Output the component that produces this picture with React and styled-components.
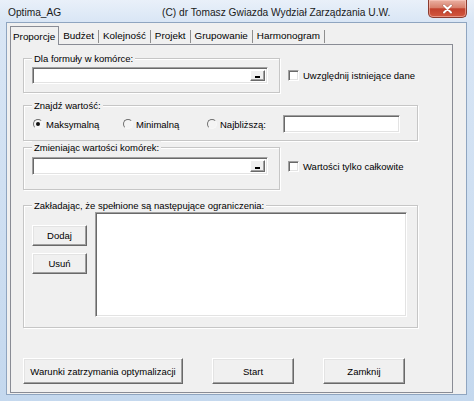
import React from 'react';
import styled, { createGlobalStyle } from 'styled-components';

const GlobalStyle = createGlobalStyle`
  html, body {
    margin: 0;
    padding: 0;
    background: #ffffff;
  }
  body {
    font-family: "Liberation Sans", Arial, sans-serif;
  }
  * {
    box-sizing: border-box;
  }
`;

const Window = styled.div`
  width: 474px;
  height: 401px;
  display: flex;
  flex-direction: column;
  background: linear-gradient(to bottom, #e9f0f9 0px, #d9e6f5 22px, #c4d8ee 100%);
  overflow: hidden;
`;

const TitleBar = styled.div`
  height: 22px;
  flex-shrink: 0;
  display: flex;
  align-items: flex-start;
  font-size: 10.2px;
  color: #1a1a1a;
`;

const Caption = styled.span`
  width: 162px;
  padding: 7px 0 0 8px;
  white-space: nowrap;
`;

const SubCaption = styled.span`
  padding-top: 7px;
  white-space: nowrap;
`;

const CloseButton = styled.div`
  margin-left: auto;
  margin-right: 7px;
  width: 39px;
  height: 18px;
  border: 1px solid #8a3b2f;
  border-top: none;
  border-radius: 0 0 5px 5px;
  background: linear-gradient(#eab0a2, #d8806c 45%, #c2412d 52%, #d2583f);
  box-shadow: inset 0 0 0 1px rgba(255, 210, 200, 0.5);
  display: flex;
  align-items: center;
  justify-content: center;
`;

const Body = styled.div`
  flex: 1;
  min-height: 0;
  margin: 0 7px 6px 6px;
  border: 1px solid #8fa5c0;
  background: #f0f0f0;
  padding: 3px 13px 1px 3px;
  display: flex;
  flex-direction: column;
`;

const TabStrip = styled.div`
  height: 18px;
  display: flex;
  align-items: flex-end;
  font-size: 9.9px;
  color: #000;
`;

const Tab = styled.div`
  display: flex;
  align-items: center;
  white-space: nowrap;
  ${({ $active }) =>
    $active
      ? `
    height: 19px;
    margin-bottom: -1px;
    padding: 0 3px 0 2px;
    border: 1px solid #898c95;
    border-bottom: none;
    background: #f0f0f0;
    position: relative;
    z-index: 1;
  `
      : `
    height: 13px;
    margin-bottom: 1px;
    padding: 0 4px 2px 4px;
    border-right: 1px solid #8e8e8e;
  `}
`;

const Panel = styled.div`
  flex: 1;
  display: flex;
  flex-direction: column;
  border: 1px solid #898c95;
  padding: 7px 0 8px 12px;
  font-size: 9.5px;
  color: #000;
`;

const Row = styled.div`
  display: flex;
  align-items: flex-start;
  margin-top: ${({ $top }) => $top || 0}px;
`;

const Group = styled.fieldset`
  margin: 0;
  min-width: 0;
  width: ${({ $width }) => $width}px;
  padding: ${({ $pt }) => $pt}px 8px ${({ $pb }) => $pb}px 8px;
  border: 1px solid #c6c6c6;
  box-shadow: 1px 1px 0 #ffffff, inset 1px 1px 0 #ffffff;
`;

const Legend = styled.legend`
  padding: 0 2px;
  line-height: 13px;
  height: 13px;
  background: #f0f0f0;
  white-space: nowrap;
`;

const Sunken = styled.div`
  background: #ffffff;
  border: 1px solid;
  border-color: #a0a0a0 #ffffff #ffffff #a0a0a0;
  box-shadow: inset 1px 1px 0 #696969, inset -1px -1px 0 #e3e3e3;
`;

const TextBox = styled(Sunken)`
  width: ${({ $width }) => $width}px;
  height: ${({ $height }) => $height}px;
  display: flex;
  justify-content: flex-end;
  padding: 2px;
  flex-shrink: 0;
`;

const RefButton = styled.div`
  width: 15px;
  height: 100%;
  background: #f0f0f0;
  border: 1px solid;
  border-color: #ffffff #696969 #696969 #ffffff;
  box-shadow: inset -1px -1px 0 #a0a0a0;
  display: flex;
  align-items: flex-end;
  justify-content: center;
  padding-bottom: 2px;
`;

const RefMark = styled.span`
  width: 5px;
  height: 2px;
  background: #000;
`;

const CheckItem = styled.label`
  display: flex;
  align-items: center;
  gap: 4px;
  height: 13px;
  margin: ${({ $top }) => $top}px 0 0 8px;
  white-space: nowrap;
`;

const CheckBox = styled.span`
  width: 11px;
  height: 11px;
  background: #ffffff;
  border: 1px solid;
  border-color: #a0a0a0 #ffffff #ffffff #a0a0a0;
  box-shadow: inset 1px 1px 0 #696969, inset -1px -1px 0 #e3e3e3;
`;

const RadioRow = styled.div`
  display: flex;
  align-items: center;
  height: 18px;
`;

const RadioOption = styled.label`
  width: ${({ $width }) => $width}px;
  display: flex;
  align-items: center;
  gap: 3px;
  padding-left: 1px;
  white-space: nowrap;
`;

const RadioCircle = styled.span`
  position: relative;
  width: 10px;
  height: 10px;
  border-radius: 50%;
  border: 1px solid;
  border-color: #6e6e6e #f8f8f8 #f8f8f8 #6e6e6e;
  background: #f4f4f4;
  flex-shrink: 0;

  &::after {
    content: '';
    display: ${({ $checked }) => ($checked ? 'block' : 'none')};
    position: absolute;
    left: 2px;
    top: 2px;
    width: 4px;
    height: 4px;
    border-radius: 50%;
    background: #111;
  }
`;

const ConstraintArea = styled.div`
  display: flex;
  align-items: flex-start;
`;

const ButtonColumn = styled.div`
  display: flex;
  flex-direction: column;
  gap: 7px;
  padding-top: 13px;
`;

const ListBox = styled(Sunken)`
  width: 312px;
  height: 105px;
  margin-left: 8px;
`;

const Button = styled.button`
  width: ${({ $width }) => $width}px;
  height: ${({ $height }) => $height}px;
  padding: 0;
  font-family: inherit;
  font-size: 9.5px;
  color: #000;
  background: #f0f0f0;
  border: 1px solid;
  border-color: #ffffff #696969 #696969 #ffffff;
  box-shadow: inset -1px -1px 0 #a0a0a0, inset 1px 1px 0 #e3e3e3;
  border-radius: 0;
`;

const Footer = styled.div`
  margin-top: auto;
  display: flex;
  gap: 29px;
`;

const tabs = ['Proporcje', 'Budżet', 'Kolejność', 'Projekt', 'Grupowanie', 'Harmonogram'];

export default function App() {
  return (
    <>
      <GlobalStyle />
      <Window>
        <TitleBar>
          <Caption>Optima_AG</Caption>
          <SubCaption>(C) dr Tomasz Gwiazda Wydział Zarządzania U.W.</SubCaption>
          <CloseButton>
            <svg width="11" height="10" viewBox="0 0 11 10">
              <path d="M2 1.5 L9 8.5 M9 1.5 L2 8.5" stroke="#5a1d12" strokeWidth="3" strokeLinecap="round" opacity="0.35" />
              <path d="M2 1.5 L9 8.5 M9 1.5 L2 8.5" stroke="#ffffff" strokeWidth="2" strokeLinecap="round" />
            </svg>
          </CloseButton>
        </TitleBar>

        <Body>
          <TabStrip>
            {tabs.map((t, i) => (
              <Tab key={t} $active={i === 0}>{t}</Tab>
            ))}
          </TabStrip>

          <Panel>
            <Row>
              <Group $width={257} $pt={2} $pb={8}>
                <Legend>Dla formuły w komórce:</Legend>
                <TextBox $width={236} $height={17}>
                  <RefButton><RefMark /></RefButton>
                </TextBox>
              </Group>
              <CheckItem $top={17}>
                <CheckBox />
                Uwzględnij istniejące dane
              </CheckItem>
            </Row>

            <Row $top={6}>
              <Group $width={395} $pt={3} $pb={7}>
                <Legend>Znajdź wartość:</Legend>
                <RadioRow>
                  <RadioOption $width={90}>
                    <RadioCircle $checked />
                    Maksymalną
                  </RadioOption>
                  <RadioOption $width={84}>
                    <RadioCircle />
                    Minimalną
                  </RadioOption>
                  <RadioOption $width={77}>
                    <RadioCircle />
                    Najbliższą:
                  </RadioOption>
                  <TextBox $width={117} $height={18} />
                </RadioRow>
              </Group>
            </Row>

            <Row>
              <Group $width={257} $pt={3} $pb={14}>
                <Legend>Zmieniając wartości komórek:</Legend>
                <TextBox $width={236} $height={18}>
                  <RefButton><RefMark /></RefButton>
                </TextBox>
              </Group>
              <CheckItem $top={19}>
                <CheckBox />
                Wartości tylko całkowite
              </CheckItem>
            </Row>

            <Row $top={9}>
              <Group $width={395} $pt={0} $pb={10}>
                <Legend>Zakładając, że spełnione są następujące ograniczenia:</Legend>
                <ConstraintArea>
                  <ButtonColumn>
                    <Button $width={55} $height={21}>Dodaj</Button>
                    <Button $width={55} $height={21}>Usuń</Button>
                  </ButtonColumn>
                  <ListBox />
                </ConstraintArea>
              </Group>
            </Row>

            <Footer>
              <Button $width={160} $height={26}>Warunki zatrzymania optymalizacji</Button>
              <Button $width={82} $height={26}>Start</Button>
              <Button $width={82} $height={26}>Zamknij</Button>
            </Footer>
          </Panel>
        </Body>
      </Window>
    </>
  );
}
